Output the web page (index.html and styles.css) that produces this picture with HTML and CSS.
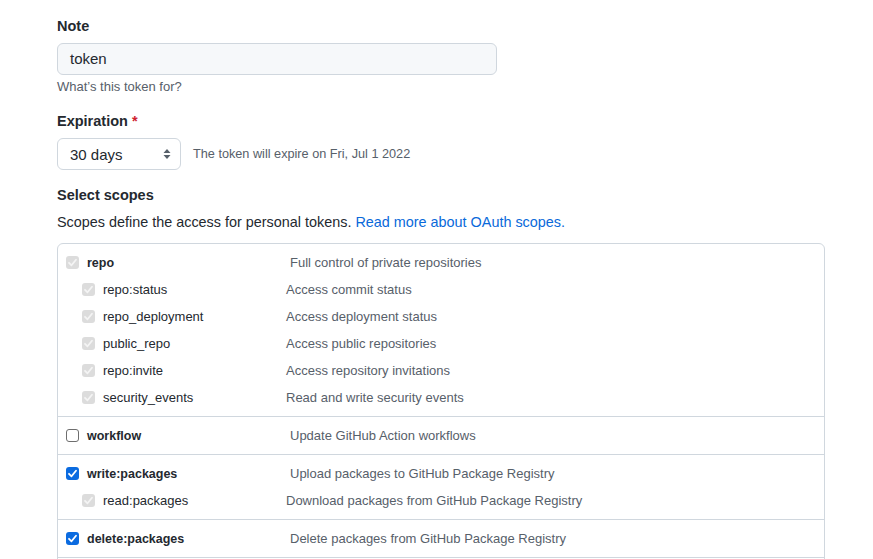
FILE: index.html
```html
<!DOCTYPE html>
<html lang="en">
<head>
<meta charset="utf-8">
<title>New personal access token</title>
<link rel="stylesheet" href="styles.css">
</head>
<body>
<form class="page">
  <label class="label label-note">Note</label>
  <div class="input">token</div>
  <p class="note">What’s this token for?</p>

  <label class="label label-exp">Expiration <span class="req">*</span></label>
  <div class="exp-row">
    <div class="select">
      <span>30 days</span>
      <svg class="arrows" width="8" height="12" viewBox="0 0 8 12"><path d="M4 1 L7.5 5 H0.5 Z" fill="#57606a"/><path d="M4 11 L7.5 7 H0.5 Z" fill="#57606a"/></svg>
    </div>
    <span class="exp-note">The token will expire on Fri, Jul 1 2022</span>
  </div>

  <h3 class="label label-scopes">Select scopes</h3>
  <p class="scopes-desc">Scopes define the access for personal tokens. <a class="link">Read more about OAuth scopes.</a></p>

  <div class="box">
    <div class="group">
      <div class="row top">
        <span class="cb cb-dis"><svg viewBox="0 0 13 13"><polyline points="3,6.8 5.5,9.3 10,3.8"/></svg></span>
        <span class="name bold">repo</span>
        <span class="desc">Full control of private repositories</span>
      </div>
      <div class="row sub">
        <span class="cb cb-dis"><svg viewBox="0 0 13 13"><polyline points="3,6.8 5.5,9.3 10,3.8"/></svg></span>
        <span class="name">repo:status</span>
        <span class="desc">Access commit status</span>
      </div>
      <div class="row sub">
        <span class="cb cb-dis"><svg viewBox="0 0 13 13"><polyline points="3,6.8 5.5,9.3 10,3.8"/></svg></span>
        <span class="name">repo_deployment</span>
        <span class="desc">Access deployment status</span>
      </div>
      <div class="row sub">
        <span class="cb cb-dis"><svg viewBox="0 0 13 13"><polyline points="3,6.8 5.5,9.3 10,3.8"/></svg></span>
        <span class="name">public_repo</span>
        <span class="desc">Access public repositories</span>
      </div>
      <div class="row sub">
        <span class="cb cb-dis"><svg viewBox="0 0 13 13"><polyline points="3,6.8 5.5,9.3 10,3.8"/></svg></span>
        <span class="name">repo:invite</span>
        <span class="desc">Access repository invitations</span>
      </div>
      <div class="row sub">
        <span class="cb cb-dis"><svg viewBox="0 0 13 13"><polyline points="3,6.8 5.5,9.3 10,3.8"/></svg></span>
        <span class="name">security_events</span>
        <span class="desc">Read and write security events</span>
      </div>
    </div>
    <div class="group">
      <div class="row top">
        <span class="cb cb-off"></span>
        <span class="name bold">workflow</span>
        <span class="desc">Update GitHub Action workflows</span>
      </div>
    </div>
    <div class="group">
      <div class="row top">
        <span class="cb cb-on"><svg viewBox="0 0 13 13"><polyline points="3,6.8 5.5,9.3 10,3.8"/></svg></span>
        <span class="name bold">write:packages</span>
        <span class="desc">Upload packages to GitHub Package Registry</span>
      </div>
      <div class="row sub">
        <span class="cb cb-dis"><svg viewBox="0 0 13 13"><polyline points="3,6.8 5.5,9.3 10,3.8"/></svg></span>
        <span class="name">read:packages</span>
        <span class="desc">Download packages from GitHub Package Registry</span>
      </div>
    </div>
    <div class="group">
      <div class="row top">
        <span class="cb cb-on"><svg viewBox="0 0 13 13"><polyline points="3,6.8 5.5,9.3 10,3.8"/></svg></span>
        <span class="name bold">delete:packages</span>
        <span class="desc">Delete packages from GitHub Package Registry</span>
      </div>
    </div>
    <div class="group">
      <div class="row top"></div>
    </div>
  </div>
</form>
</body>
</html>
```
FILE: styles.css
```css
* { box-sizing: border-box; }
html, body {
  margin: 0;
  padding: 0;
  background: #ffffff;
  overflow: hidden;
}
body {
  font-family: "Liberation Sans", Arial, sans-serif;
  color: #24292f;
  height: 559px;
}
.page {
  display: flex;
  flex-direction: column;
  align-items: flex-start;
  padding: 16px 0 0 57px;
  width: 826px;
}
.label {
  display: block;
  margin: 0;
  font-size: 14.5px;
  font-weight: 700;
  line-height: 20px;
  color: #24292f;
}
.req { color: #cf222e; }
.input {
  margin-top: 7px;
  width: 440px;
  height: 32px;
  padding: 0 12px 1px;
  display: flex;
  align-items: center;
  font-size: 15px;
  background: #f6f8fa;
  border: 1px solid #d0d7de;
  border-radius: 6px;
}
.note {
  margin: 3px 0 0;
  font-size: 13px;
  line-height: 18px;
  color: #57606a;
}
.label-exp { margin-top: 15px; }
.exp-row {
  margin-top: 7px;
  display: flex;
  align-items: center;
  gap: 12px;
}
.select {
  width: 124px;
  height: 32px;
  padding: 0 9px 0 12px;
  display: flex;
  align-items: center;
  justify-content: space-between;
  font-size: 15px;
  background: #ffffff;
  border: 1px solid #d0d7de;
  border-radius: 6px;
}
.exp-note {
  font-size: 12.7px;
  color: #57606a;
}
.label-scopes { margin-top: 15px; }
.scopes-desc {
  margin: 7px 0 0;
  font-size: 14.4px;
  line-height: 20px;
}
.link { color: #0969da; text-decoration: none; }
.box {
  margin-top: 11px;
  width: 768px;
  border: 1px solid #d0d7de;
  border-radius: 6px;
}
.group {
  padding: 5px 0;
  border-top: 1px solid #d0d7de;
}
.group:first-child { border-top: none; }
.row {
  height: 27px;
  display: flex;
  align-items: center;
}
.row.top { padding-left: 8px; }
.row.sub { padding-left: 24px; }
.cb {
  flex: none;
  width: 13px;
  height: 13px;
  border-radius: 3px;
  display: flex;
  align-items: center;
  justify-content: center;
  margin-right: 8px;
}
.cb svg { width: 13px; height: 13px; display: block; }
.cb polyline {
  fill: none;
  stroke-width: 1.8;
  stroke-linecap: round;
  stroke-linejoin: round;
}
.cb-dis { background: #dcdcdc; }
.cb-dis polyline { stroke: #f4f4f4; }
.cb-on { background: #0b6be0; }
.cb-on polyline { stroke: #ffffff; }
.cb-off { background: #ffffff; border: 1px solid #6e6e6e; }
.name {
  flex: none;
  font-size: 13px;
  color: #24292f;
}
.row.top .name { width: 203px; }
.row.sub .name { width: 183px; }
.name.bold { font-weight: 700; font-size: 12.5px; }
.desc {
  font-size: 13px;
  color: #57606a;
}
```
